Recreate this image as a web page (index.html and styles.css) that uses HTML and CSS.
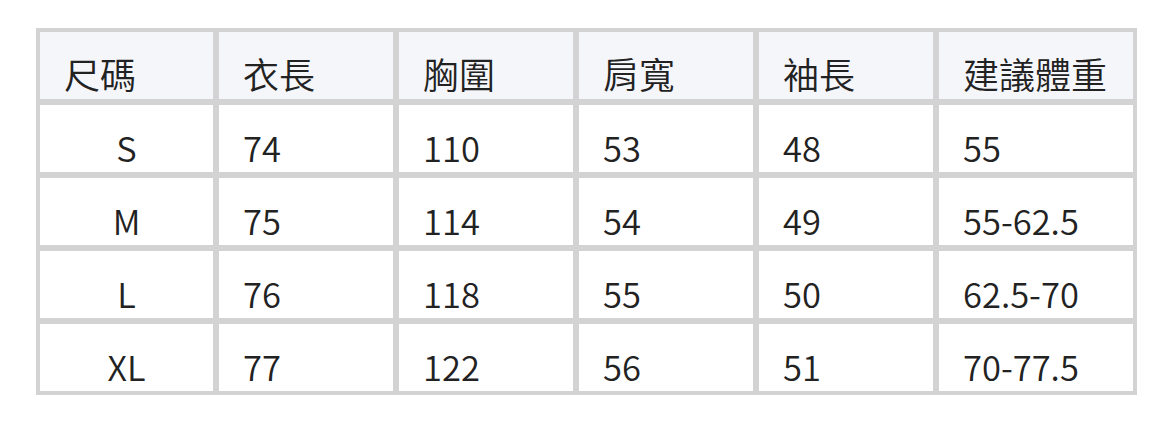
FILE: index.html
```html
<!DOCTYPE html>
<html lang="zh-Hant">
<head>
<meta charset="utf-8">
<title>尺碼表</title>
<link rel="stylesheet" href="styles.css">
</head>
<body>
<table class="size-table">
  <thead>
    <tr>
      <th class="c1">尺碼</th>
      <th class="c2">衣長</th>
      <th class="c2">胸圍</th>
      <th class="c2">肩寬</th>
      <th class="c2">袖長</th>
      <th class="c6">建議體重</th>
    </tr>
  </thead>
  <tbody>
    <tr><td class="size">S</td><td>74</td><td>110</td><td>53</td><td>48</td><td>55</td></tr>
    <tr><td class="size">M</td><td>75</td><td>114</td><td>54</td><td>49</td><td>55-62.5</td></tr>
    <tr><td class="size">L</td><td>76</td><td>118</td><td>55</td><td>50</td><td>62.5-70</td></tr>
    <tr><td class="size">XL</td><td>77</td><td>122</td><td>56</td><td>51</td><td>70-77.5</td></tr>
  </tbody>
</table>
</body>
</html>
```

FILE: styles.css
```css
html, body {
  margin: 0;
  padding: 0;
  background: #ffffff;
}

body {
  padding: 28px 0 0 36px;
  font-family: "Noto Sans CJK TC", "Noto Sans", sans-serif;
  color: #222222;
}

.size-table {
  border-collapse: separate;
  border-spacing: 0;
  border: 1px solid #d3d3d3;
  table-layout: fixed;
  width: 1101px;
}

.size-table th,
.size-table td {
  box-sizing: border-box;
  border: 3px solid #d3d3d3;
  height: 73px;
  padding: 0 24px;
  font-size: 34.5px;
  font-weight: 350;
  line-height: 50px;
  text-align: left;
  vertical-align: bottom;
  white-space: nowrap;
}

.size-table th {
  background: #f5f6fa;
  font-size: 36px;
  padding-bottom: 1px;
}

.size-table td {
  padding-bottom: 0;
}

.size-table .c1 { width: 179px; }
.size-table .c2 { width: 180px; }
.size-table .c6 { width: 200px; }

.size-table td.size {
  text-align: center;
}
```
